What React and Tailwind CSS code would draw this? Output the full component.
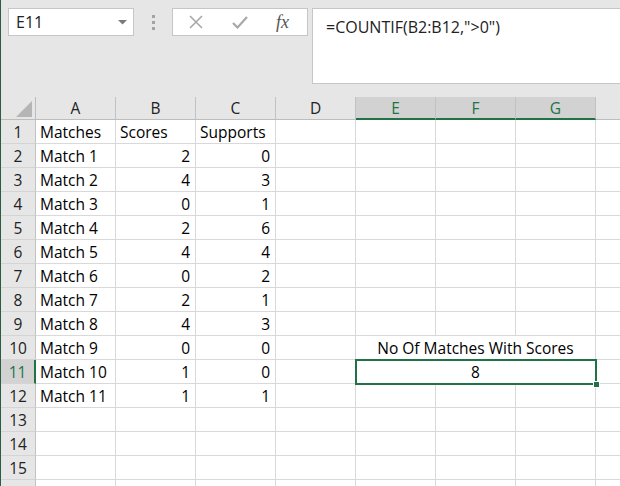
import React from "react";

const COLS = ["A", "B", "C", "D", "E", "F", "G"];

const DATA = [
  ["Matches", "Scores", "Supports"],
  ["Match 1", 2, 0],
  ["Match 2", 4, 3],
  ["Match 3", 0, 1],
  ["Match 4", 2, 6],
  ["Match 5", 4, 4],
  ["Match 6", 0, 2],
  ["Match 7", 2, 1],
  ["Match 8", 4, 3],
  ["Match 9", 0, 0],
  ["Match 10", 1, 0],
  ["Match 11", 1, 1],
];

function Cell({ children, align = "left", wide = false }) {
  return (
    <div
      className={
        (wide ? "w-[240px] " : "w-[80px] ") +
        "shrink-0 h-full border-r border-b border-[#d9d9d9] bg-white pt-[2px] leading-[21px] whitespace-nowrap " +
        (align === "right"
          ? "text-right pr-[5px]"
          : align === "center"
          ? "text-center"
          : "text-left pl-[4px]")
      }
    >
      {children}
    </div>
  );
}

function Row({ n }) {
  const row = DATA[n - 1];
  const selected = n === 11;
  return (
    <div className="flex h-[24px]">
      <div
        className={
          "w-[35px] shrink-0 h-full border-b border-[#d4d4d4] text-center pt-[2px] leading-[21px] " +
          (selected
            ? "bg-[#d2d2d2] text-[#217346] border-r-2 border-r-[#217346]"
            : "bg-[#e6e6e6] text-[#222] border-r border-r-[#c2c2c2]")
        }
      >
        {n <= 15 ? n : ""}
      </div>
      <Cell>{row ? row[0] : ""}</Cell>
      <Cell align={n === 1 ? "left" : "right"}>{row ? row[1] : ""}</Cell>
      <Cell align={n === 1 ? "left" : "right"}>{row ? row[2] : ""}</Cell>
      <Cell />
      {n === 10 ? (
        <Cell wide align="center">No Of Matches With Scores</Cell>
      ) : n === 11 ? (
        <Cell wide align="center">8</Cell>
      ) : (
        <>
          <Cell />
          <Cell />
          <Cell />
        </>
      )}
      <div className="flex-1 h-full border-b border-[#d9d9d9] bg-white" />
    </div>
  );
}

export default function App() {
  return (
    <div
      className="flex w-[620px] h-[486px] overflow-hidden bg-[#e6e6e6] text-[15.5px] text-black"
      style={{ fontFamily: '"Open Sans", "Liberation Sans", sans-serif' }}
    >
      {/* window edge */}
      <div className="w-[1px] shrink-0 bg-[#2a5e44]" />

      <div className="flex-1 flex flex-col min-w-0">
        {/* formula bar */}
        <div className="h-[97px] shrink-0 flex items-start pt-[8px] pl-[7px]">
          <div className="w-[126px] h-[28px] bg-white border border-[#c6c6c6] flex items-center justify-between pl-[7px] pr-[6px] text-[16px] text-[#222]">
            <span>E11</span>
            <svg width="9" height="5" viewBox="0 0 9 5">
              <path d="M0 0 L9 0 L4.5 4.5 Z" fill="#7a7a7a" />
            </svg>
          </div>
          <div className="w-[38px] h-[28px] flex flex-col items-center justify-center gap-[3px]">
            <div className="w-[3px] h-[3px] bg-[#a3a3a3]" />
            <div className="w-[3px] h-[3px] bg-[#a3a3a3]" />
            <div className="w-[3px] h-[3px] bg-[#a3a3a3]" />
          </div>
          <div className="w-[136px] h-[28px] bg-white border border-[#c6c6c6] flex items-center pl-[15px]">
            <svg width="16" height="14" viewBox="0 0 16 14">
              <path d="M2 1 L14 13 M14 1 L2 13" stroke="#a8a8a8" strokeWidth="1.6" fill="none" />
            </svg>
            <svg width="16" height="14" viewBox="0 0 16 14" className="ml-[28px]">
              <path d="M1 8 L5.5 12.5 L15 2" stroke="#a8a8a8" strokeWidth="2.2" fill="none" />
            </svg>
            <span
              className="ml-[28px] italic text-[18px] text-[#555] leading-none"
              style={{ fontFamily: '"Liberation Serif", serif' }}
            >
              fx
            </span>
          </div>
          <div className="ml-[4px] flex-1 h-[76px] bg-white border border-r-0 border-[#c6c6c6] pl-[13px] pt-[6px] text-[16px] text-[#222]">
            =COUNTIF(B2:B12,"&gt;0")
          </div>
        </div>

        {/* sheet */}
        <div className="relative flex-1">
          <div className="flex h-[23px]">
            <div className="w-[35px] shrink-0 h-full border-r border-b border-[#bdbdbd] flex items-end justify-end pr-[3px] pb-[2px]">
              <svg width="16" height="16" viewBox="0 0 16 16">
                <path d="M16 0 L16 16 L0 16 Z" fill="#b5b5b5" />
              </svg>
            </div>
            {COLS.map((c) => {
              const sel = c === "E" || c === "F" || c === "G";
              return (
                <div
                  key={c}
                  className={
                    "w-[80px] shrink-0 h-full border-r border-[#c2c2c2] text-center leading-[22px] " +
                    (sel
                      ? "bg-[#d2d2d2] text-[#217346] border-b-2 border-b-[#217346]"
                      : "text-[#222] border-b border-b-[#bdbdbd]")
                  }
                >
                  {c}
                </div>
              );
            })}
            <div className="flex-1 h-full border-b border-[#bdbdbd]" />
          </div>

          {Array.from({ length: 16 }, (_, i) => (
            <Row key={i} n={i + 1} />
          ))}

          {/* selection */}
          <div className="absolute left-[354px] top-[262px] w-[242px] h-[26px] border-2 border-[#217346]">
            <div className="absolute right-[-5px] bottom-[-5px] w-[7px] h-[7px] bg-[#217346] border border-white" />
          </div>
        </div>
      </div>
    </div>
  );
}
